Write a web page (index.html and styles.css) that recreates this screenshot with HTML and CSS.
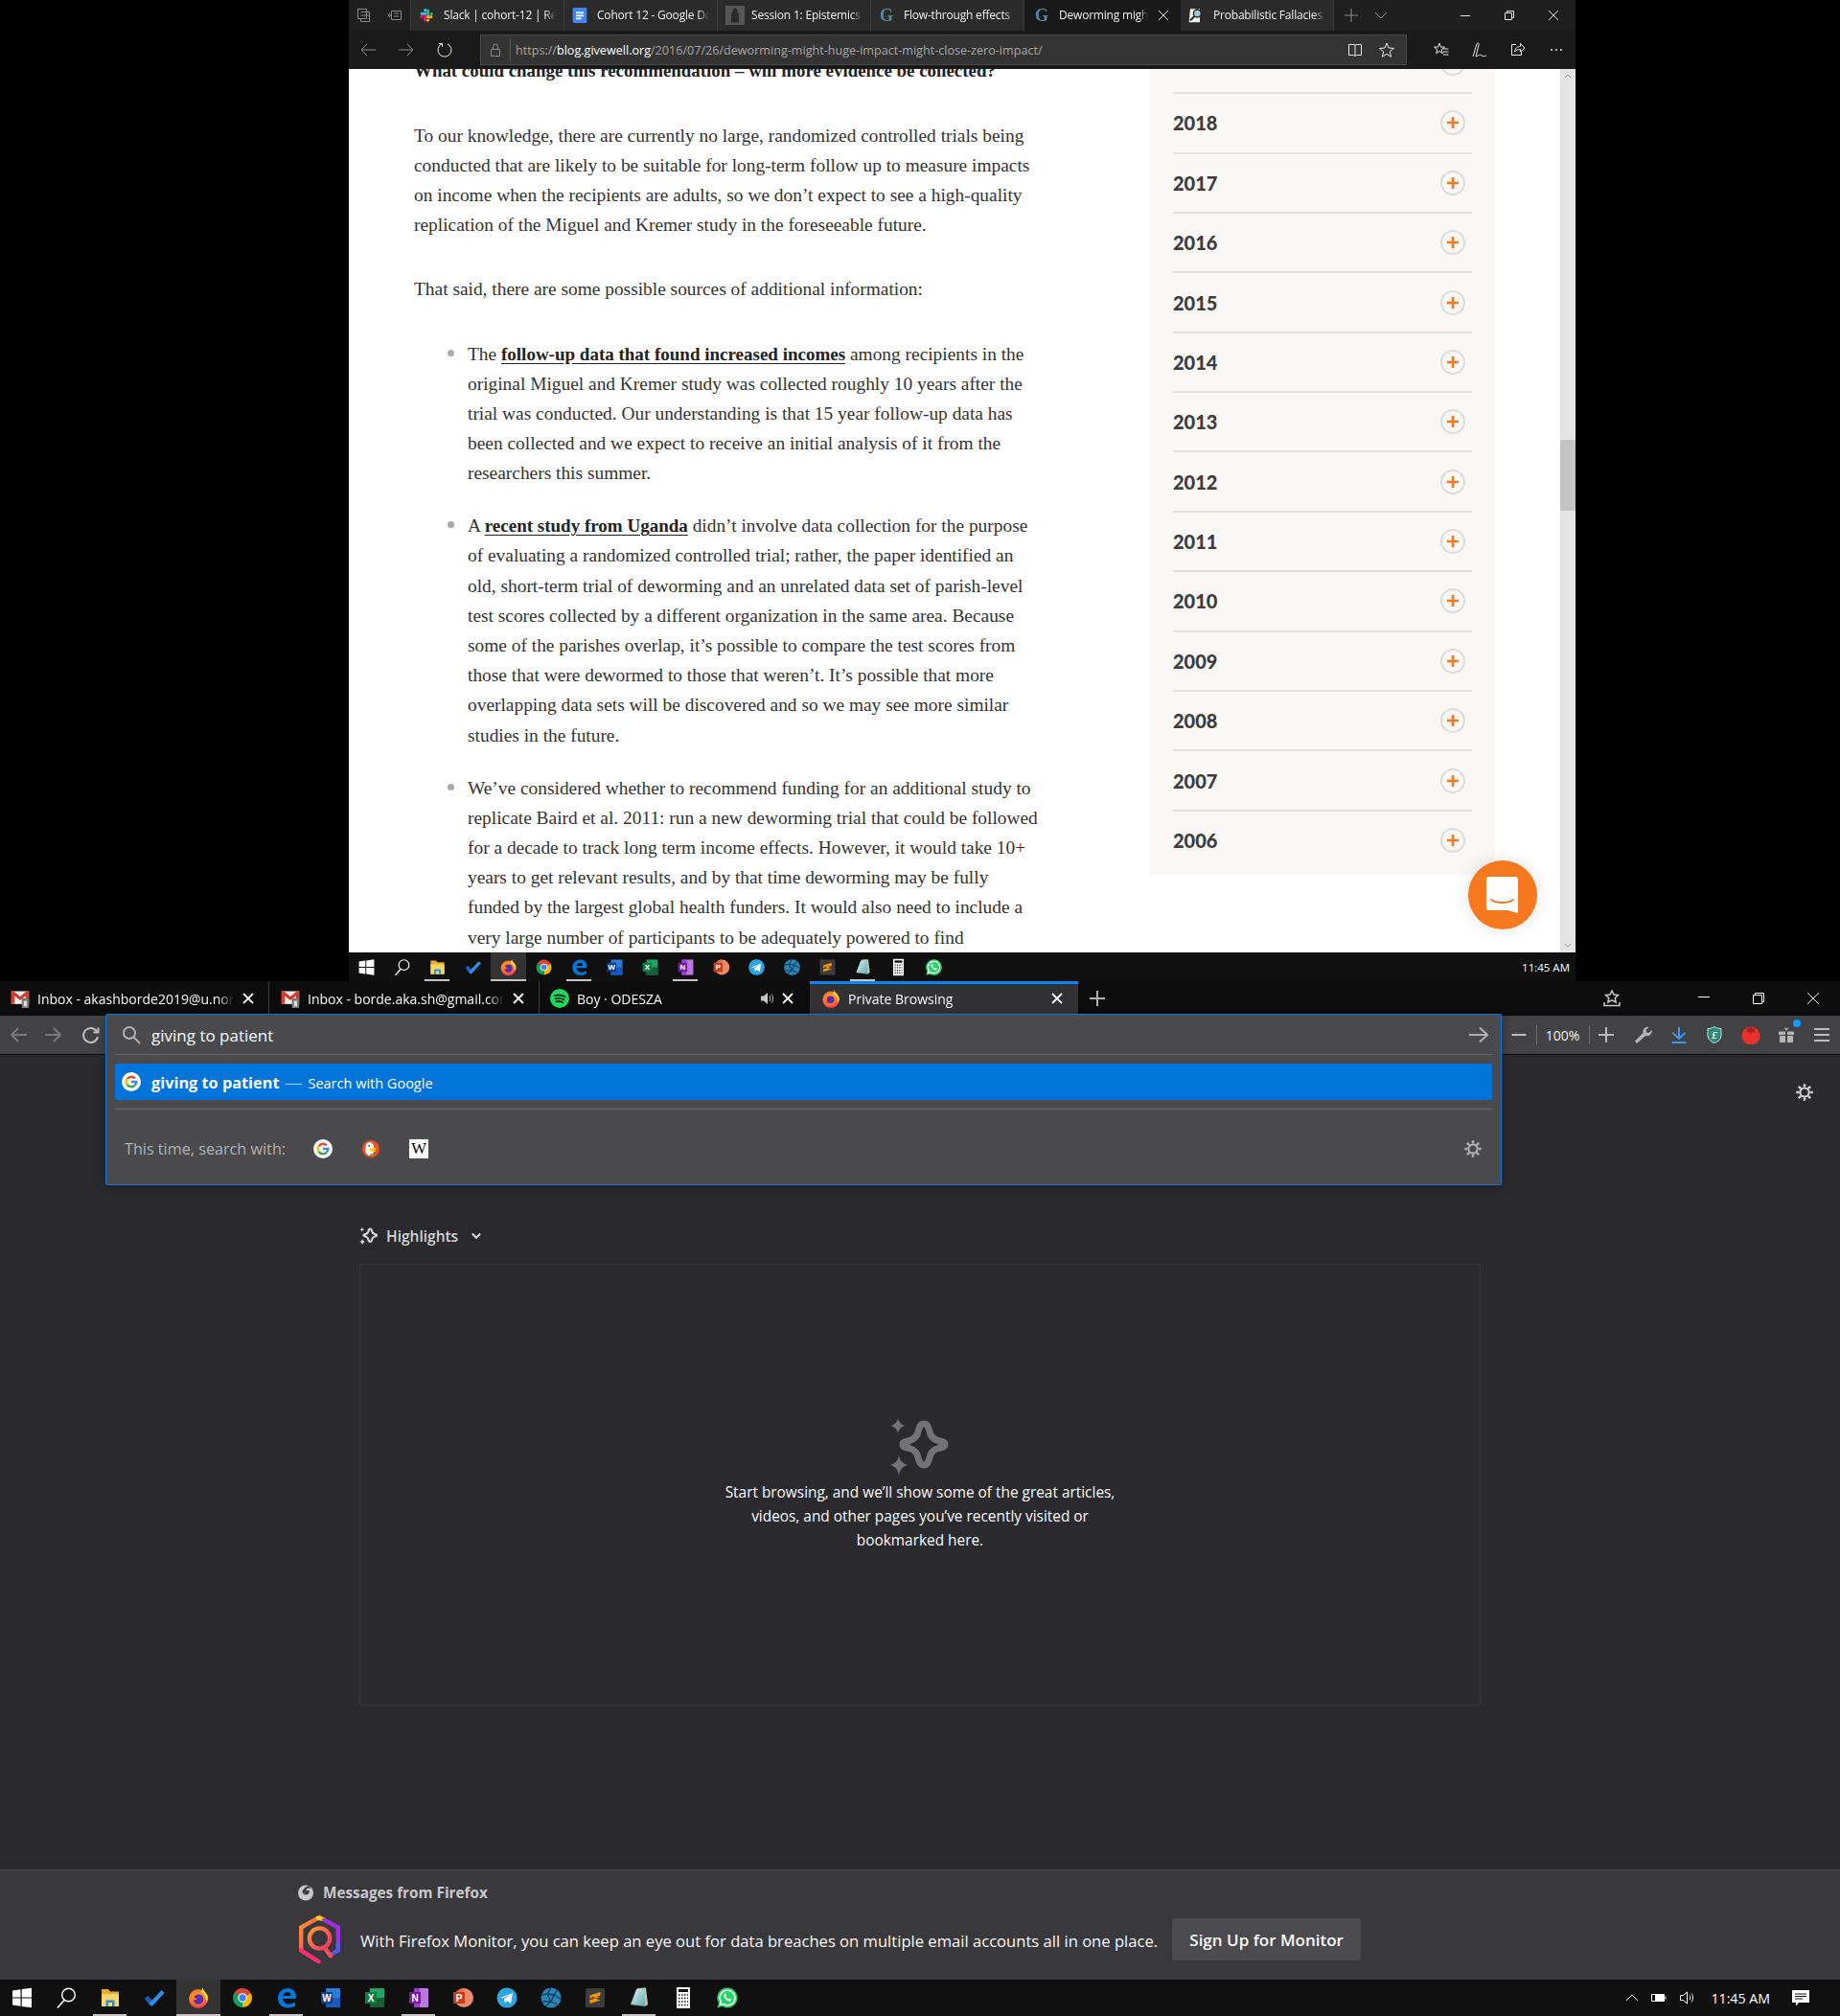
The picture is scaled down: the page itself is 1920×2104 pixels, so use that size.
FILE: index.html
```html
<!DOCTYPE html>
<html lang="en">

<head>
    <meta charset="UTF-8">
    <meta name="viewport" content="width=device-width, initial-scale=1.0">
    <title>Screenshots</title>
    <link rel="stylesheet" href="styles.css">
</head>

<body>
    <!-- shared icons -->
    <svg class="sprite" xmlns="http://www.w3.org/2000/svg">
        <defs>
            <radialGradient id="ffg" cx="45%" cy="40%" r="70%">
                <stop offset="0" stop-color="#ffb21e"/>
                <stop offset="0.6" stop-color="#ff6a2b"/>
                <stop offset="1" stop-color="#e31587"/>
            </radialGradient>
            <linearGradient id="padg" x1="0" y1="0" x2="1" y2="1">
                <stop offset="0" stop-color="#e4f4f4"/>
                <stop offset="1" stop-color="#5fa8ad"/>
            </linearGradient>
            <linearGradient id="mong" x1="0" y1="0" x2="1" y2="1">
                <stop offset="0" stop-color="#ff9a2e"/>
                <stop offset="1" stop-color="#ff2d6f"/>
            </linearGradient>
        </defs>
        <symbol id="i-win" viewBox="0 0 24 24"><path fill="#fff" d="M2 4.500 10.500 3.300V11.400H2ZM11.700 3.100 22 1.700V11.400H11.700ZM2 12.600H10.500V20.700L2 19.500ZM11.700 12.600H22V22.300L11.700 20.900Z"/></symbol>
        <symbol id="i-find" viewBox="0 0 24 24"><circle cx="14.500" cy="9" r="6.800" fill="none" stroke="#fff" stroke-width="1.400"/><path d="M10 14.500 3 22.500" stroke="#fff" stroke-width="1.600"/></symbol>
        <symbol id="i-folder" viewBox="0 0 24 24"><path fill="#e9a92e" d="M3 3h7l2 2.500h9V21H3z"/><path fill="#fbd668" d="M3 8h18v13H3z"/><path fill="#2a8fd8" d="M7.500 21v-6.500h9V21h-2.500v-4h-4v4z"/></symbol>
        <symbol id="i-todo" viewBox="0 0 24 24"><path fill="#1b5cad" d="M2 13l3.200-3.200 5 5-2.600 5.400z"/><path fill="#2f8fe8" d="M6.500 18 19.600 4l3 3L9.600 21z"/></symbol>
        <symbol id="i-ff" viewBox="0 0 24 24"><circle cx="12" cy="13" r="10" fill="url(#ffg)"/><path fill="#ffd43b" d="M16.500 1c.5 4 4.500 6 5.500 10 .5 3-1 5-2 6 .5-6-3-9-6-11 1-1 2-3 2.500-5z"/><circle cx="12" cy="13.500" r="5.200" fill="#5b2bb5"/><path fill="#ff8a1e" d="M3 9.500c2-2 5-2.500 8-1.500-2 1-3.500 2-3.500 3.500 0 1 2 1 3.500 1-1 2-5 2.500-8 .5z"/></symbol>
        <symbol id="i-chrome" viewBox="0 0 24 24"><path fill="#db4437" d="M12 12 3.340 7A10 10 0 0 1 20.660 7Z"/><path fill="#f4b400" d="M12 12 20.660 7A10 10 0 0 1 12 22Z"/><path fill="#0f9d58" d="M12 12 12 22A10 10 0 0 1 3.340 7Z"/><circle cx="12" cy="12" r="4.800" fill="#fff"/><circle cx="12" cy="12" r="3.700" fill="#4285f4"/></symbol>
        <symbol id="i-edge" viewBox="0 0 24 24"><path fill="#0078d7" fill-rule="evenodd" d="M21.500 13H8c.3 3.500 3 5.500 6.500 5.500 2.300 0 4.500-.7 6.500-2v4c-2 1.200-4.600 2-7.500 2C7 22.500 3 18 3 12.500 3 6.500 7.500 2 13.500 2 18.500 2 22 5.500 22 11c0 .7 0 1.300-.5 2zM16.500 10c0-2.300-1.300-4-3.500-4-2.300 0-4.300 1.700-4.800 4z"/></symbol>
        <symbol id="i-word" viewBox="0 0 24 24"><rect x="7" y="2" width="15" height="20" rx="1" fill="#2b7cd3"/><rect x="7" y="12" width="15" height="10" fill="#185abd"/><rect x="2" y="6" width="12" height="12" fill="#103f91"/></symbol>
        <symbol id="i-excel" viewBox="0 0 24 24"><rect x="7" y="2" width="15" height="20" rx="1" fill="#21a366"/><rect x="7" y="12" width="15" height="10" fill="#185c37"/><rect x="2" y="6" width="12" height="12" fill="#107c41"/></symbol>
        <symbol id="i-note" viewBox="0 0 24 24"><rect x="7" y="2" width="15" height="20" rx="1" fill="#ba77e0"/><rect x="7" y="2" width="6" height="20" fill="#9a3fd0"/><rect x="2" y="6" width="12" height="12" fill="#7719aa"/></symbol>
        <symbol id="i-ppt" viewBox="0 0 24 24"><circle cx="13" cy="12" r="10" fill="#ed8a6c"/><path fill="#ed6c47" d="M13 2v10H3a10 10 0 0 1 10-10z"/><rect x="2" y="6" width="12" height="12" fill="#c43e1c"/></symbol>
        <symbol id="i-tg" viewBox="0 0 24 24"><circle cx="12" cy="12" r="10.500" fill="#2ca5e0"/><path fill="#fff" d="M5 12 18 7l-2 11-4-3-2 2.500-1-4.200 7-5-8.500 4.200z"/></symbol>
        <symbol id="i-crystal" viewBox="0 0 24 24"><circle cx="12" cy="12" r="10.500" fill="#2b86b8"/><path fill="none" stroke="#0d3f5c" stroke-width="1.300" d="M12 1.500 8 8l-6 1M8 8l7 1 4-6M15 9l-3 7-6 5M12 16l7 3M15 9l7 4M8 8l4 8-9 0"/></symbol>
        <symbol id="i-subl" viewBox="0 0 24 24"><rect x="2" y="2" width="20" height="20" rx="1.500" fill="#3c3c3c"/><path fill="#ff9800" d="M6.500 9.500 17.500 6v3.500L6.500 13zM6.500 11l11 3.500V11zM6.500 14.500 17.500 11v3.500L6.500 18z"/></symbol>
        <symbol id="i-pad" viewBox="0 0 24 24"><path fill="#c9c2b0" d="M10 2 19 1.500 21 19l-3 2z"/><path fill="url(#padg)" d="M9 3 18 2.500 18 21 3 19z"/></symbol>
        <symbol id="i-calc" viewBox="0 0 24 24"><rect x="5" y="1" width="14" height="22" fill="#fff"/><rect x="7" y="3" width="10" height="3" fill="#111"/><path stroke="#111" stroke-width="1.500" stroke-dasharray="1.500 1.500" d="M7 9h10M7 12.500h10M7 16h10M7 19.500h10"/></symbol>
        <symbol id="i-wa" viewBox="0 0 24 24"><path fill="#25d366" d="M12 1.500A10.500 10.500 0 0 0 3 17.500L1.500 22.500l5.200-1.400A10.500 10.500 0 1 0 12 1.500z"/><path fill="none" stroke="#fff" stroke-width="1.500" d="M12 4.200a7.800 7.800 0 0 0-6.700 11.800l-.8 3.300 3.300-.8A7.800 7.800 0 1 0 12 4.200z"/><path fill="#fff" d="M9 7.800c-1.200 1-1 3.200 1 5.500s4.500 3 5.700 1.800l.6-1.300-2.300-1.200-.8.800c-1.200-.4-2.600-1.800-3-3l.8-.8-1-2.200z"/></symbol>

        <symbol id="i-slack" viewBox="0 0 24 24"><g fill="none" stroke-width="4.400" stroke-linecap="round"><path stroke="#36c5f0" d="M4.500 9.500h6M9.800 4h.4"/><path stroke="#2eb67d" d="M14.500 4.500v6M20 9.800v.4"/><path stroke="#ecb22e" d="M13.500 14.500h6M14 20h.3"/><path stroke="#e01e5a" d="M9.500 13.500v6M4 14v.3"/></g></symbol>
        <symbol id="i-docs" viewBox="0 0 24 24"><rect x="1" y="0" width="22" height="24" rx="2" fill="#4285f4"/><path stroke="#fff" stroke-width="2.400" d="M6 8h12M6 12.500h12M6 17h8"/></symbol>
        <symbol id="i-session" viewBox="0 0 24 24"><rect width="24" height="24" fill="#565656"/><path fill="#2b2b2b" d="M12 3c2 0 3 2 3 4l1.500 3 .5 11H7l.5-11L9 7c0-2 1-4 3-4z"/></symbol>
        <symbol id="i-mag" viewBox="0 0 24 24"><path fill="#f2f2f2" d="M3 2h15v21H1z"/><circle cx="14" cy="9" r="6" fill="#9cc8d8" stroke="#222" stroke-width="2"/><path stroke="#222" stroke-width="3" d="M9.500 13.500 3 20"/></symbol>
        <symbol id="i-gmail" viewBox="0 0 24 24"><rect x="1" y="3" width="22" height="16" fill="#f1f1f1"/><path fill="#d23f31" d="M1 3h3l8 6.500L20 3h3v16h-4V9l-7 5.500L5 9v10H1z"/><rect x="14" y="12" width="9" height="12" rx="1" fill="#777"/><rect x="16.500" y="15" width="4" height="7" fill="#ddd"/></symbol>
        <symbol id="i-spot" viewBox="0 0 24 24"><circle cx="12" cy="12" r="12" fill="#1ed760"/><path fill="none" stroke="#16331f" stroke-width="2.200" stroke-linecap="round" d="M6 8.500c4-1 9-.8 12.500 1.300M6.700 12.300c3.500-.8 7.700-.5 10.500 1.200M7.500 16c2.800-.6 6-.4 8.300 1"/></symbol>
        <symbol id="i-ff-big" viewBox="1 0 22 23"><circle cx="12" cy="13" r="10" fill="url(#ffg)"/><path fill="#ffd43b" d="M16 1c.5 4 5 6 6 10 .5 3-1 5-2 6 .5-6-3-9-6-11 1-1 2-3 2-5z"/><circle cx="11.500" cy="13" r="4.500" fill="#5b2bb5"/></symbol>

        <symbol id="i-gg" viewBox="0 0 24 24"><circle cx="12" cy="12" r="12" fill="#fff"/><g fill="none" stroke-width="2.800"><path stroke="#ea4335" d="M6.800 8.400A6.500 6.500 0 0 1 16.600 7.600"/><path stroke="#fbbc05" d="M6.800 8.400A6.500 6.500 0 0 0 6.800 15.600"/><path stroke="#34a853" d="M6.800 15.600A6.500 6.500 0 0 0 16.600 16.400"/><path stroke="#4285f4" d="M16.600 16.400A6.500 6.500 0 0 0 18.500 12H12"/></g></symbol>
        <symbol id="i-duck" viewBox="0 0 24 24"><circle cx="12" cy="12" r="11" fill="#de5833" stroke="#a83a1c"/><ellipse cx="10.500" cy="12" rx="5.500" ry="8.500" fill="#fff"/><path fill="#fdd20a" d="M11 11h8l-1 2h-3l3 1-1 1.500-6-.5z"/><path fill="#65bc46" d="M11 18h3l1 3-4-1z"/><circle cx="10" cy="8" r="1.200" fill="#2d4f8e"/></symbol>

        <symbol id="i-gear" viewBox="0 0 24 24"><g fill="none" stroke="currentColor"><circle cx="12" cy="12" r="5.500" stroke-width="2.400"/><path stroke-width="3" d="M12 1.500v4M12 18.500v4M1.500 12h4M18.500 12h4M4.600 4.600l2.800 2.800M16.600 16.600l2.800 2.800M4.600 19.400l2.800-2.800M16.600 7.400l2.800-2.800"/></g></symbol>
        <symbol id="i-star4" viewBox="0 0 64 60"><path d="M36 6C40 6 41 10 42 14 43 19 46 22 51 23.500 55 24.500 58 24.500 58 27.500 58 30.500 55 30.500 51 31.500 46 33 43 36 42 41 41 45 40 49 36 49 32 49 31 45 30 41 29 36 26 33 21 31.500 17 30.500 14 30.500 14 27.500 14 24.500 17 24.500 21 23.500 26 22 29 19 30 14 31 10 32 6 36 6Z" fill="none" stroke="currentColor" stroke-width="7" stroke-linejoin="round"/><path fill="currentColor" d="M9 0C10 4 11.500 6 16 8 11.500 10 10 12 9 16 8 12 6.500 10 2 8 6.500 6 8 4 9 0ZM10 39C11 44 13 47 19 49 13 51 11 54 10 60 9 54 7 51 1 49 7 47 9 44 10 39Z"/></symbol>
        <symbol id="i-plus-o" viewBox="0 0 26 26"><circle cx="13" cy="13" r="12" fill="#faf8f6" stroke="#dedcda" stroke-width="2"/><path stroke="#f7791f" stroke-width="2.600" d="M13 7v12M7 13h12"/></symbol>
    </svg>

    <!-- top window: Edge -->
    <div class="edge">
        <div class="edge-tabs">
            <div class="edge-cell">
                <svg class="ic16 line-dim" viewBox="0 0 16 16"><path d="M1.500 1.500h9v3h3v10h-9v-3h-3zM4.500 4.500h6v7h-6M4.500 8h9"/></svg>
            </div>
            <div class="edge-cell">
                <svg class="ic16 line-dim" viewBox="0 0 16 16"><path d="M4.500 3.500h10v9h-10zM4.500 8H1M3 6 1 8l2 2M7 6h5M7 9h5"/></svg>
            </div>
            <div class="edge-tab"><svg class="ic16"><use href="#i-slack"/></svg><span class="edge-tab-text">Slack | cohort-12 | Research</span></div>
            <div class="edge-tab"><svg class="ic16"><use href="#i-docs"/></svg><span class="edge-tab-text">Cohort 12 - Google Docs</span></div>
            <div class="edge-tab"><svg class="ic20"><use href="#i-session"/></svg><span class="edge-tab-text">Session 1: Epistemics</span></div>
            <div class="edge-tab"><svg class="ic16" viewBox="0 0 24 24"><text class="serif-g" x="12" y="21" font-size="27">G</text></svg><span class="edge-tab-text">Flow-through effects</span></div>
            <div class="edge-tab edge-tab-active"><svg class="ic16" viewBox="0 0 24 24"><text class="serif-g" x="12" y="21" font-size="27">G</text></svg><span class="edge-tab-text">Deworming might</span>
                <svg class="ic12 line-lite" viewBox="0 0 12 12"><path d="M1 1l10 10M11 1 1 11"/></svg>
            </div>
            <div class="edge-tab"><svg class="ic16"><use href="#i-mag"/></svg><span class="edge-tab-text">Probabilistic Fallacies</span></div>
            <div class="edge-new">
                <svg class="ic14 line-dim" viewBox="0 0 14 14"><path d="M7 0v14M0 7h14"/></svg>
                <svg class="ic14 line-dim" viewBox="0 0 14 14"><path d="M1 4l6 6 6-6"/></svg>
            </div>
            <div class="win-btns">
                <div class="win-btn"><svg class="ic12 line-lite" viewBox="0 0 12 12"><path d="M1 6.500h10"/></svg></div>
                <div class="win-btn"><svg class="ic12 line-lite" viewBox="0 0 12 12"><path d="M1.500 3.500h7v7h-7zM3.500 3.500v-2h7v7h-2"/></svg></div>
                <div class="win-btn"><svg class="ic12 line-lite" viewBox="0 0 12 12"><path d="M1 1l10 10M11 1 1 11"/></svg></div>
            </div>
        </div>

        <div class="edge-bar">
            <div class="edge-btn"><svg class="ic16 line-dim" viewBox="0 0 16 16"><path d="M16 8H1M7 2 1 8l6 6"/></svg></div>
            <div class="edge-btn"><svg class="ic16 line-dim" viewBox="0 0 16 16"><path d="M0 8h15M9 2l6 6-6 6"/></svg></div>
            <div class="edge-btn"><svg class="ic16 line-lite" viewBox="0 0 16 16"><path d="M5 1.800A7 7 0 1 0 11 1.800M5.500 4.800V1.500H2"/></svg></div>
            <div class="address">
                <svg class="ic14 line-dim" viewBox="0 0 14 14"><path d="M2.500 6.500h9v7h-9zM4.500 6.500V3.500a2.500 2.500 0 0 1 5 0v3"/></svg>
                <span class="address-sep"></span>
                <span class="address-url">https://<b>blog.givewell.org</b>/2016/07/26/deworming-might-huge-impact-might-close-zero-impact/</span>
                <svg class="ic16 line-lite address-book" viewBox="0 0 16 16"><path d="M1.500 2.500h5.500a1 1 0 0 1 1 1 1 1 0 0 1 1-1h5.500v11H9.500l-1.500 1-1.500-1h-5zM8 3.500v11"/></svg>
                <svg class="ic16 line-lite address-star" viewBox="0 0 16 16"><path d="M8 1l2 5 5.500.4-4.200 3.500 1.300 5.300L8 12.300 3.400 15.200l1.300-5.300L.5 6.400 6 6z"/></svg>
            </div>
            <div class="edge-btn edge-btn-first"><svg class="ic16 line-lite" viewBox="0 0 16 16"><path d="M6 1l1.400 4 4.100.2-3.200 2.500 1 4L6 9.400 2.700 11.700l1-4L.5 5.200 4.600 5zM10 7h5.500M10 10h5.500M10 13h5.500"/></svg></div>
            <div class="edge-btn"><svg class="ic16 line-lite" viewBox="0 0 16 16"><path d="M1 15c1.500-4 2-8 4-13 1-2 2.500-1 2 1L4 15c3-1 4-3 6-1 1.500 1 3 1 5 0"/></svg></div>
            <div class="edge-btn"><svg class="ic16 line-lite" viewBox="0 0 16 16"><path d="M6 2.500H1.500v11h10V9M4.500 10c.5-4 3-5.500 6-5.500V1.500L15 6l-4.500 4V7.500c-2.500 0-4.500.5-6 2.500z"/></svg></div>
            <div class="edge-btn"><svg class="ic16 dots" viewBox="0 0 16 16"><path d="M2 8h2M7 8h2M12 8h2"/></svg></div>
        </div>

        <div class="page">
            <div class="article">
                <h2>What could change this recommendation &ndash; will more evidence be collected?</h2>
                <p>To our knowledge, there are currently no large, randomized controlled trials being<br>
                    conducted that are likely to be suitable for long-term follow up to measure impacts<br>
                    on income when the recipients are adults, so we don&rsquo;t expect to see a high-quality<br>
                    replication of the Miguel and Kremer study in the foreseeable future.</p>
                <p>That said, there are some possible sources of additional information:</p>
                <ul>
                    <li>The <a href="#">follow-up data that found increased incomes</a> among recipients in the<br>
                        original Miguel and Kremer study was collected roughly 10 years after the<br>
                        trial was conducted. Our understanding is that 15 year follow-up data has<br>
                        been collected and we expect to receive an initial analysis of it from the<br>
                        researchers this summer.</li>
                    <li>A <a href="#">recent study from Uganda</a> didn&rsquo;t involve data collection for the purpose<br>
                        of evaluating a randomized controlled trial; rather, the paper identified an<br>
                        old, short-term trial of deworming and an unrelated data set of parish-level<br>
                        test scores collected by a different organization in the same area. Because<br>
                        some of the parishes overlap, it&rsquo;s possible to compare the test scores from<br>
                        those that were dewormed to those that weren&rsquo;t. It&rsquo;s possible that more<br>
                        overlapping data sets will be discovered and so we may see more similar<br>
                        studies in the future.</li>
                    <li>We&rsquo;ve considered whether to recommend funding for an additional study to<br>
                        replicate Baird et al. 2011: run a new deworming trial that could be followed<br>
                        for a decade to track long term income effects. However, it would take 10+<br>
                        years to get relevant results, and by that time deworming may be fully<br>
                        funded by the largest global health funders. It would also need to include a<br>
                        very large number of participants to be adequately powered to find</li>
                </ul>
            </div>

            <div class="archive">
                <div class="year-row"><span></span><svg class="year-plus"><use href="#i-plus-o"/></svg></div>
                <div class="year-row"><span>2018</span><svg class="year-plus"><use href="#i-plus-o"/></svg></div>
                <div class="year-row"><span>2017</span><svg class="year-plus"><use href="#i-plus-o"/></svg></div>
                <div class="year-row"><span>2016</span><svg class="year-plus"><use href="#i-plus-o"/></svg></div>
                <div class="year-row"><span>2015</span><svg class="year-plus"><use href="#i-plus-o"/></svg></div>
                <div class="year-row"><span>2014</span><svg class="year-plus"><use href="#i-plus-o"/></svg></div>
                <div class="year-row"><span>2013</span><svg class="year-plus"><use href="#i-plus-o"/></svg></div>
                <div class="year-row"><span>2012</span><svg class="year-plus"><use href="#i-plus-o"/></svg></div>
                <div class="year-row"><span>2011</span><svg class="year-plus"><use href="#i-plus-o"/></svg></div>
                <div class="year-row"><span>2010</span><svg class="year-plus"><use href="#i-plus-o"/></svg></div>
                <div class="year-row"><span>2009</span><svg class="year-plus"><use href="#i-plus-o"/></svg></div>
                <div class="year-row"><span>2008</span><svg class="year-plus"><use href="#i-plus-o"/></svg></div>
                <div class="year-row"><span>2007</span><svg class="year-plus"><use href="#i-plus-o"/></svg></div>
                <div class="year-row"><span>2006</span><svg class="year-plus"><use href="#i-plus-o"/></svg></div>
            </div>

            <div class="page-gap"></div>

            <div class="scrollbar">
                <svg class="scroll-arrow" viewBox="0 0 10 6"><path d="M1 5l4-4 4 4"/></svg>
                <div class="scroll-thumb"></div>
                <svg class="scroll-arrow scroll-arrow-down" viewBox="0 0 10 6"><path d="M1 1l4 4 4-4"/></svg>
            </div>

            <div class="chat-btn">
                <svg width="36" height="40" viewBox="0 0 36 40"><path fill="#fff" d="M4 1h27a3 3 0 0 1 3 3v35l-11-3H4a3 3 0 0 1-3-3V4a3 3 0 0 1 3-3z"/><path fill="none" stroke="#f7791f" stroke-width="2" stroke-linecap="round" d="M6 25c6 4 17 4 23 0"/></svg>
            </div>
        </div>

        <div class="taskbar taskbar-small">
            <div class="task-cell"><svg><use href="#i-win"/></svg></div>
            <div class="task-cell"><svg><use href="#i-find"/></svg></div>
            <div class="task-cell task-open"><svg><use href="#i-folder"/></svg></div>
            <div class="task-cell"><svg><use href="#i-todo"/></svg></div>
            <div class="task-cell task-open task-active"><svg><use href="#i-ff"/></svg></div>
            <div class="task-cell"><svg><use href="#i-chrome"/></svg></div>
            <div class="task-cell task-open"><svg><use href="#i-edge"/></svg></div>
            <div class="task-cell"><svg viewBox="0 0 24 24"><use href="#i-word"/><text class="logo-letter" x="8" y="15.600" font-size="10">W</text></svg></div>
            <div class="task-cell"><svg viewBox="0 0 24 24"><use href="#i-excel"/><text class="logo-letter" x="8" y="15.600" font-size="10">X</text></svg></div>
            <div class="task-cell task-open"><svg viewBox="0 0 24 24"><use href="#i-note"/><text class="logo-letter" x="8" y="15.600" font-size="10">N</text></svg></div>
            <div class="task-cell"><svg viewBox="0 0 24 24"><use href="#i-ppt"/><text class="logo-letter" x="8" y="15.600" font-size="10">P</text></svg></div>
            <div class="task-cell"><svg><use href="#i-tg"/></svg></div>
            <div class="task-cell"><svg><use href="#i-crystal"/></svg></div>
            <div class="task-cell"><svg><use href="#i-subl"/></svg></div>
            <div class="task-cell task-open"><svg><use href="#i-pad"/></svg></div>
            <div class="task-cell"><svg><use href="#i-calc"/></svg></div>
            <div class="task-cell"><svg><use href="#i-wa"/></svg></div>
            <div class="task-clock">11:45 AM</div>
        </div>
    </div>

    <!-- bottom window: Firefox -->
    <div class="ff">
        <div class="ff-tabs">
            <div class="ff-tab ff-tab-first">
                <svg class="ic20"><use href="#i-gmail"/></svg>
                <span class="ff-tab-text">Inbox - akashborde2019@u.northwestern.edu</span>
                <svg class="ic14 line-white" viewBox="0 0 14 14"><path d="M2 2l10 10M12 2 2 12"/></svg>
            </div>
            <div class="ff-tab">
                <svg class="ic20"><use href="#i-gmail"/></svg>
                <span class="ff-tab-text">Inbox - borde.aka.sh@gmail.com</span>
                <svg class="ic14 line-white" viewBox="0 0 14 14"><path d="M2 2l10 10M12 2 2 12"/></svg>
            </div>
            <div class="ff-tab ff-tab-spotify">
                <svg class="ic20"><use href="#i-spot"/></svg>
                <span class="ff-tab-text">Boy &middot; ODESZA</span>
                <svg class="ic16 speaker" viewBox="0 0 16 16"><path fill="#c8c8c8" d="M1 5.500h3L8 2v12L4 10.500H1z"/><path fill="none" stroke="#c8c8c8" d="M10 5c1.200 1.500 1.200 4.500 0 6M12 3.500c2 2.500 2 6.500 0 9"/></svg>
                <svg class="ic14 line-white" viewBox="0 0 14 14"><path d="M2 2l10 10M12 2 2 12"/></svg>
            </div>
            <div class="ff-tab ff-tab-active">
                <svg class="ic20"><use href="#i-ff-big"/></svg>
                <span class="ff-tab-text">Private Browsing</span>
                <svg class="ic14 line-white" viewBox="0 0 14 14"><path d="M2 2l10 10M12 2 2 12"/></svg>
            </div>
            <div class="ff-new"><svg class="ic18 line-gray" viewBox="0 0 18 18"><path d="M9 1v16M1 9h16"/></svg></div>
            <div class="ff-tabs-right">
                <svg class="ic18 pocket" viewBox="0 0 18 18"><path d="M9 1l2 4 4.500.5-3.200 3 .9 4.500L9 10.800 4.800 13l.9-4.500-3.200-3L7 5zM1 13v3.500h16V13"/></svg>
                <div class="ff-win-btns">
                    <div class="ff-win-btn"><svg class="ic14 line-white-thin" viewBox="0 0 14 14"><path d="M1 5.500h12"/></svg></div>
                    <div class="ff-win-btn"><svg class="ic14 line-white-thin" viewBox="0 0 14 14"><path d="M1.500 3.500h9v9h-9zM3.500 3.500v-2h9v9h-2"/></svg></div>
                    <div class="ff-win-btn"><svg class="ic14 line-white-thin" viewBox="0 0 14 14"><path d="M1 1l12 12M13 1 1 13"/></svg></div>
                </div>
            </div>
        </div>

        <div class="ff-toolbar">
            <svg class="ic20 tool-nav tool-dim" viewBox="0 0 20 20"><path d="M19 10H3M10 3l-7 7 7 7"/></svg>
            <svg class="ic20 tool-nav tool-dim" viewBox="0 0 20 20"><path d="M1 10h16M10 3l7 7-7 7"/></svg>
            <svg class="ic20 tool-nav tool-lite tool-reload" viewBox="0 0 20 20"><path d="M16 6.500A7.500 7.500 0 1 0 17 12M17.500 2.500v5h-5"/></svg>
            <div class="tool-right">
                <svg class="ic18 tool-lite tool-zoom-btn" viewBox="0 0 18 18"><path d="M1.500 9h15"/></svg>
                <span class="tool-sep"></span>
                <span class="tool-zoom">100%</span>
                <span class="tool-sep"></span>
                <svg class="ic18 tool-lite tool-zoom-btn tool-plus" viewBox="0 0 18 18"><path d="M9 1v16M1 9h16"/></svg>
                <div class="tool-cell"><svg class="ic20" viewBox="0 0 20 20"><path fill="#b4b4b4" d="M2 16.500 10.500 8a5 5 0 0 1 6-6l-3 3 .5 2.500 2.500.5 3-3a5 5 0 0 1-6.500 6L4 19z"/></svg></div>
                <div class="tool-cell"><svg class="ic20 tool-blue" viewBox="0 0 20 20"><path d="M10 2v11M3.500 8l6.500 6 6.500-6M2.500 18h15"/></svg></div>
                <div class="tool-cell"><svg class="ic20" viewBox="0 0 20 20"><path fill="#2d8a78" stroke="#c8e8de" d="M10 1.500c2 1.500 4.500 2 7 2v7c0 4-3 6.500-7 8-4-1.500-7-4-7-8v-7c2.500 0 5-.5 7-2z"/><text class="shield-text" x="10" y="14" font-size="11">&pound;</text></svg></div>
                <div class="tool-cell"><svg class="ic20" viewBox="0 0 20 20"><circle cx="10" cy="11" r="9.500" fill="#e8322c"/><path fill="#a81e1a" d="M10 1l1.500 2.500L15 3l-2 2.500 2 2-3.500-.5L10 9.500 8.500 7 5 7.500l2-2L5 3l3.500.5z"/></svg></div>
                <div class="tool-cell"><svg class="ic20" viewBox="0 0 20 20"><path fill="#b4b4b4" d="M2 6.500h7v3.500H2zM11 6.500h7v3.500h-7zM3 11h6v7H3zM11 11h6v7h-6zM8 3.500l2 2.500 2-2.500-1-1-1 1-1-1z"/></svg><span class="gift-dot"></span></div>
                <div class="tool-cell"><svg class="ic20 tool-lite" viewBox="0 0 20 20"><path d="M2 4h16M2 10h16M2 16h16"/></svg></div>
            </div>
        </div>

        <div class="ff-content">
            <svg class="ic20 page-gear"><use href="#i-gear"/></svg>
            <div class="highlights">
                <div class="hl-head">
                    <svg class="ic20 hl-star"><use href="#i-star4"/></svg>
                    <span>Highlights</span>
                    <svg class="hl-chev" viewBox="0 0 10 10"><path d="M1.500 3 5 6.500 8.500 3"/></svg>
                </div>
                <div class="hl-box">
                    <svg class="empty-star"><use href="#i-star4"/></svg>
                    <div class="empty-text">Start browsing, and we&rsquo;ll show some of the great articles,<br>
                        videos, and other pages you&rsquo;ve recently visited or<br>
                        bookmarked here.</div>
                </div>
            </div>
        </div>

        <div class="messages">
            <div class="msg-head">
                <svg class="ic18" viewBox="0 0 18 18"><circle cx="9" cy="9.500" r="8" fill="#c8c8cc"/><path fill="#38383d" d="M12 2c1 1 2 2 2 3-1-.5-2-.8-3-.5L9 7h4c0 3-2 4.500-4 4.500-2 0-3-1-3.500-2.500C7 10 8 9.500 8 9H5.500c0-1.500 1-3.500 3-5 1-.8 2.500-1.500 3.500-2z"/></svg>
                <span>Messages from Firefox</span>
            </div>
            <div class="msg-row">
                <svg class="msg-logo" viewBox="0 0 48 54">
                    <g fill="none" stroke-width="4.500" stroke-linecap="round">
                        <path stroke="url(#mong)" d="M24 3 4 14v25"/>
                        <path stroke="#ff2d6f" d="M4 39l19 12"/>
                        <path stroke="#ffd21e" d="M22 4l6 1"/>
                        <path stroke="#a030e0" d="M29 6l15 8v18"/>
                        <path stroke="#5b5be8" d="M44 32v7l-5 3"/>
                        <path stroke="#ff4f5e" d="M30 37l6 8"/>
                        <circle stroke="url(#mong)" cx="24" cy="26" r="11"/>
                    </g>
                </svg>
                <span class="msg-text">With Firefox Monitor, you can keep an eye out for data breaches on multiple email accounts all in one place.</span>
                <button class="msg-btn">Sign Up for Monitor</button>
            </div>
        </div>

        <div class="taskbar">
            <div class="task-cell"><svg><use href="#i-win"/></svg></div>
            <div class="task-cell"><svg><use href="#i-find"/></svg></div>
            <div class="task-cell task-open"><svg><use href="#i-folder"/></svg></div>
            <div class="task-cell"><svg><use href="#i-todo"/></svg></div>
            <div class="task-cell task-open task-active"><svg><use href="#i-ff"/></svg></div>
            <div class="task-cell"><svg><use href="#i-chrome"/></svg></div>
            <div class="task-cell task-open"><svg><use href="#i-edge"/></svg></div>
            <div class="task-cell"><svg viewBox="0 0 24 24"><use href="#i-word"/><text class="logo-letter" x="8" y="15.600" font-size="10">W</text></svg></div>
            <div class="task-cell"><svg viewBox="0 0 24 24"><use href="#i-excel"/><text class="logo-letter" x="8" y="15.600" font-size="10">X</text></svg></div>
            <div class="task-cell task-open"><svg viewBox="0 0 24 24"><use href="#i-note"/><text class="logo-letter" x="8" y="15.600" font-size="10">N</text></svg></div>
            <div class="task-cell"><svg viewBox="0 0 24 24"><use href="#i-ppt"/><text class="logo-letter" x="8" y="15.600" font-size="10">P</text></svg></div>
            <div class="task-cell"><svg><use href="#i-tg"/></svg></div>
            <div class="task-cell"><svg><use href="#i-crystal"/></svg></div>
            <div class="task-cell"><svg><use href="#i-subl"/></svg></div>
            <div class="task-cell task-open"><svg><use href="#i-pad"/></svg></div>
            <div class="task-cell"><svg><use href="#i-calc"/></svg></div>
            <div class="task-cell"><svg><use href="#i-wa"/></svg></div>
            <div class="tray">
                <svg class="ic14 tray-line" viewBox="0 0 14 14"><path d="M1 10l6-6 6 6"/></svg>
                <svg class="ic18 tray-line" viewBox="0 0 18 18"><path d="M1.500 5.500h13v7h-13zM16 7.500v3"/><rect x="5" y="6" width="9" height="6" fill="#fff"/></svg>
                <svg class="ic18 tray-line" viewBox="0 0 18 18"><path d="M1.500 6.500h3L8.500 3v12l-4-3.500h-3zM11 6.500c1 1.500 1 3.500 0 5M13 4.500c2 2.500 2 6.500 0 9"/></svg>
                <span class="tray-clock">11:45 AM</span>
                <svg class="ic20 tray-note" viewBox="0 0 20 20"><path fill="#fff" d="M1 2h18v13H8l-3 3.500V15H1z"/><path stroke="#111" d="M4 6h12M4 8.500h12M4 11h8"/></svg>
            </div>
        </div>

        <!-- url dropdown sits over the toolbar and the page -->
        <div class="url-panel">
            <div class="url-input">
                <svg class="ic20 url-search" viewBox="0 0 20 20"><circle cx="8" cy="8" r="6"/><path d="M12.500 12.500 19 19"/></svg>
                <span class="url-value">giving to patient</span>
                <svg class="ic20 url-go" viewBox="0 0 20 20"><path d="M0 10h19M11 2.500l8 7.500-8 7.500"/></svg>
            </div>
            <div class="url-result">
                <svg class="ic20"><use href="#i-gg"/></svg>
                <b>giving to patient</b>
                <span class="url-dash"></span>
                <span>Search with Google</span>
            </div>
            <div class="url-oneoff">
                <span class="oneoff-label">This time, search with:</span>
                <svg class="ic20 oneoff-icon"><use href="#i-gg"/></svg>
                <svg class="ic20 oneoff-icon"><use href="#i-duck"/></svg>
                <svg class="ic20 oneoff-icon" viewBox="0 0 24 24"><rect width="24" height="24" fill="#fff"/><text class="serif-w" x="12" y="18" font-size="20">W</text></svg>
                <svg class="ic20 oneoff-gear"><use href="#i-gear"/></svg>
            </div>
        </div>
    </div>
</body>

</html>
```

FILE: styles.css
```css
* {
    box-sizing: border-box;
}

body {
    margin: 0;
    padding: 0;
    width: 1920px;
    height: 2104px;
    overflow: hidden;
    background-color: #000;
    font-family: "Open Sans", "Noto Sans", sans-serif;
}

svg {
    display: block;
    flex: none;
}

.sprite {
    width: 0;
    height: 0;
    overflow: hidden;
}

.logo-letter {
    font-family: "Liberation Sans", sans-serif;
    font-weight: 700;
    fill: #fff;
    text-anchor: middle;
}

.serif-g {
    font-family: "Liberation Serif", serif;
    font-weight: 700;
    fill: #4f8aa8;
    text-anchor: middle;
}

.serif-w {
    font-family: "Liberation Serif", serif;
    fill: #000;
    text-anchor: middle;
}

.shield-text {
    font-family: "Liberation Serif", serif;
    font-weight: 700;
    font-style: italic;
    fill: #fff;
    text-anchor: middle;
}

.ic12 { width: 12px; height: 12px; }
.ic14 { width: 14px; height: 14px; }
.ic16 { width: 16px; height: 16px; }
.ic18 { width: 18px; height: 18px; }
.ic20 { width: 20px; height: 20px; }

.line-dim path { fill: none; stroke: #8a8a8a; stroke-width: 1; }
.line-lite path { fill: none; stroke: #e8e8e8; stroke-width: 1; }
.line-gray path { fill: none; stroke: #b1b1b3; stroke-width: 2; }
.line-white path { fill: none; stroke: #f4f4f4; stroke-width: 1.8; }
.line-white-thin path { fill: none; stroke: #f4f4f4; stroke-width: 1; }

/* Edge window */

.edge {
    width: 1280px;
    height: 1024px;
    margin-left: 364px;
    display: flex;
    flex-direction: column;
}

.edge-tabs {
    height: 32px;
    display: flex;
    background-color: #1f1f1f;
}

.edge-cell {
    width: 32px;
    display: flex;
    align-items: center;
    justify-content: center;
}

.edge-cell:nth-child(2) {
    width: 33px;
    border-right: 1px solid #3a3a3a;
}

.edge-tab {
    width: 160px;
    padding: 0 8px 2px;
    display: flex;
    align-items: center;
    gap: 10px;
    background-color: #2b2b2b;
    border-right: 1px solid #3a3a3a;
    color: #f0f0f0;
    font-size: 12px;
    letter-spacing: -0.2px;
}

.edge-tab svg {
    margin-top: 2px;
}

.edge-tab .ic20 {
    margin-right: -3px;
}

.edge-tab-active {
    width: 163px;
    padding-left: 10px;
    padding-right: 12px;
    background-color: #191919;
    border-right: none;
}

.edge-tab-text {
    flex: 1;
    overflow: hidden;
    white-space: nowrap;
    -webkit-mask-image: linear-gradient(to right, #000 90%, transparent);
    mask-image: linear-gradient(to right, #000 90%, transparent);
}

.edge-new {
    display: flex;
    align-items: center;
    gap: 17px;
    padding-left: 11px;
}

.win-btns {
    display: flex;
    margin-left: auto;
}

.win-btn {
    width: 46px;
    display: flex;
    align-items: center;
    justify-content: center;
}

.edge-bar {
    height: 40px;
    display: flex;
    align-items: center;
    background-color: #1a1a1a;
}

.edge-btn {
    width: 40px;
    height: 40px;
    display: flex;
    align-items: center;
    justify-content: center;
}

.edge-btn-first {
    margin-left: 16px;
}

.address {
    width: 967px;
    height: 32px;
    margin-left: 17px;
    display: flex;
    align-items: center;
    background-color: #333;
    border: 1px solid #4a4a4a;
    padding-left: 8px;
}

.address-sep {
    width: 1px;
    height: 24px;
    margin-left: 8px;
    background-color: #555;
}

.address-url {
    margin-left: 5px;
    font-size: 12.6px;
    color: #a8a8a8;
    white-space: nowrap;
}

.address-url b {
    font-weight: 400;
    color: #fff;
}

.address-book {
    margin-left: auto;
}

.address-star {
    margin-left: 17px;
    margin-right: 12px;
}

.dots path {
    fill: none;
    stroke: #e8e8e8;
    stroke-width: 1.5;
}

.page {
    position: relative;
    height: 922px;
    display: flex;
    overflow: hidden;
    background-color: #fff;
}

.article {
    width: 836px;
    padding-left: 68px;
    margin-top: -14.5px;
    font-family: "Liberation Serif", serif;
    font-size: 19.4px;
    line-height: 31.2px;
    color: #333;
}

.article h2 {
    margin: 0 0 37px;
    font-size: 18.9px;
    line-height: 31px;
    font-weight: 700;
    color: #222;
}

.article p {
    margin: 0 0 36px;
    white-space: nowrap;
}

.article ul {
    margin: -1px 0 0;
    padding: 0 0 0 56px;
    white-space: nowrap;
}

.article li {
    margin-bottom: 22.7px;
}

.article li::marker {
    color: #aaa;
    font-size: 24px;
}

.article a {
    color: #222;
    font-size: 0.98em;
    font-weight: 700;
    text-decoration: underline;
    text-underline-offset: 3px;
}

.archive {
    width: 360px;
    height: 841px;
    padding: 0 24px;
    overflow: hidden;
    background-color: #faf8f6;
}

.year-row {
    height: 62.39px;
    display: flex;
    align-items: center;
    justify-content: space-between;
    padding-right: 7px;
    border-top: 2px solid #e4e2e0;
    font-family: Lato, sans-serif;
    font-size: 20px;
    font-weight: 900;
    color: #3c3c3c;
}

.year-row:first-child {
    margin-top: -38.2px;
}

.year-plus {
    width: 26px;
    height: 26px;
}

.page-gap {
    width: 68px;
}

.scrollbar {
    width: 16px;
    display: flex;
    flex-direction: column;
    align-items: center;
    background-color: #e4e4e4;
}

.scroll-arrow {
    width: 8px;
    height: 5px;
    margin-top: 5px;
    flex: none;
}

.scroll-arrow path {
    fill: none;
    stroke: #8a8a8a;
}

.scroll-thumb {
    width: 16px;
    height: 74px;
    margin-top: 377px;
    background-color: #c4c4c4;
}

.scroll-arrow-down {
    margin-top: auto;
    margin-bottom: 5px;
}

.chat-btn {
    position: absolute;
    right: 40px;
    bottom: 24px;
    width: 72px;
    height: 72px;
    border-radius: 50%;
    background-color: #f7791f;
    box-shadow: 0 0 18px rgba(0, 0, 0, 0.12);
    display: flex;
    align-items: center;
    justify-content: center;
}

/* Windows taskbars */

.taskbar {
    height: 38px;
    display: flex;
    background-color: #101010;
}

.task-cell {
    position: relative;
    width: 46px;
    display: flex;
    align-items: center;
    justify-content: center;
}

.task-cell svg {
    width: 24px;
    height: 24px;
}

.task-open::after {
    content: "";
    position: absolute;
    left: 5px;
    right: 6px;
    bottom: 0;
    height: 2px;
    background-color: #c8c4c4;
}

.task-active {
    background-color: #333;
}

.task-active::after {
    left: 0;
    right: 0;
}

.taskbar-small {
    height: 30px;
}

.taskbar-small .task-cell {
    width: 37px;
}

.taskbar-small .task-cell svg {
    width: 19px;
    height: 19px;
}

.task-clock {
    margin-left: auto;
    padding-right: 6px;
    align-self: center;
    font-size: 11.5px;
    color: #fff;
}

.tray {
    margin-left: auto;
    display: flex;
    align-items: center;
    padding-right: 32px;
    color: #fff;
    font-size: 14.2px;
}

.tray-line path {
    fill: none;
    stroke: #fff;
}

.tray-line {
    margin-right: 12px;
}

.tray-clock {
    margin-left: 3px;
    margin-right: 22px;
}

.tray-note {
    margin-right: -1px;
}

/* Firefox window */

.ff {
    position: relative;
    height: 1080px;
    display: flex;
    flex-direction: column;
    background-color: #2a2a2e;
}

.ff-tabs {
    height: 36px;
    display: flex;
    background-color: #0c0c0d;
    color: #f9f9fa;
    font-size: 14px;
}

.ff-tab {
    width: 282px;
    padding: 0 14px 0 12px;
    display: flex;
    align-items: center;
    gap: 8px;
    border-right: 1px solid #3f3f42;
}

.ff-tab-first {
    width: 281px;
    padding-left: 11px;
}

.ff-tab-spotify {
    padding-left: 11px;
    padding-right: 16px;
    border-right: none;
}

.ff-tab-active {
    width: 280px;
    padding-left: 12px;
    padding-right: 15px;
    padding-bottom: 3px;
    background-color: #323234;
    border-right: none;
    border-top: 3px solid #0a84ff;
}

.ff-tab-text {
    flex: 1;
    overflow: hidden;
    white-space: nowrap;
    -webkit-mask-image: linear-gradient(to right, #000 92%, transparent);
    mask-image: linear-gradient(to right, #000 92%, transparent);
}

.speaker {
    margin-right: -2px;
}

.ff-new {
    width: 40px;
    display: flex;
    align-items: center;
    justify-content: center;
}

.ff-tabs-right {
    flex: 1;
    display: flex;
    align-items: center;
}

.pocket {
    margin-left: 508px;
}

.pocket path {
    fill: none;
    stroke: #c8c8c8;
    stroke-width: 1.5;
}

.ff-win-btns {
    display: flex;
    margin-left: auto;
}

.ff-win-btn {
    width: 57px;
    display: flex;
    justify-content: center;
}

.ff-toolbar {
    height: 41px;
    display: flex;
    align-items: center;
    padding-left: 9px;
    gap: 17px;
    background-color: #424244;
    border-bottom: 1px solid #0c0c0d;
}

.tool-nav {
    flex: none;
}

.tool-reload {
    margin-left: 2px;
}

.tool-dim path {
    fill: none;
    stroke: #78787a;
    stroke-width: 2;
}

.tool-lite path {
    fill: none;
    stroke: #bdbdbf;
    stroke-width: 2;
}

.tool-blue path {
    fill: none;
    stroke: #3a9bf2;
    stroke-width: 2;
}

.tool-right {
    margin-left: auto;
    display: flex;
    align-items: center;
}

.tool-zoom-btn {
    margin: 0 9px;
}

.tool-plus {
    margin: 0 11px 0 8px;
}

.tool-sep {
    width: 1px;
    height: 20px;
    background-color: #6f6f72;
}

.tool-zoom {
    width: 54px;
    text-align: center;
    font-size: 14px;
    color: #f0f0f0;
}

.tool-cell {
    position: relative;
    width: 37.4px;
    display: flex;
    justify-content: center;
}

.gift-dot {
    position: absolute;
    top: -6px;
    right: 4px;
    width: 8px;
    height: 8px;
    border-radius: 50%;
    background-color: #0a9dff;
}

.ff-content {
    position: relative;
    flex: 1;
    padding-top: 176px;
}

.page-gear {
    position: absolute;
    top: 29px;
    right: 27px;
    color: #d0d0d2;
}

.highlights {
    width: 1170px;
    margin-left: 375px;
}

.hl-head {
    height: 26px;
    display: flex;
    align-items: center;
    color: #d4d4d6;
    font-size: 15.5px;
    font-weight: 600;
}

.hl-star {
    color: #d4d4d6;
    margin-right: 8px;
}

.hl-chev {
    width: 12px;
    height: 12px;
    margin-left: 13px;
}

.hl-chev path {
    fill: none;
    stroke: #d4d4d6;
    stroke-width: 1.8;
}

.hl-box {
    height: 461px;
    margin-top: 16px;
    display: flex;
    flex-direction: column;
    align-items: center;
    justify-content: center;
    border: 1px solid #38383d;
    border-radius: 3px;
}

.empty-star {
    width: 64px;
    height: 60px;
    color: #737375;
}

.empty-text {
    margin-top: 5px;
    text-align: center;
    font-size: 15.4px;
    line-height: 25px;
    color: #f9f9fa;
}

.messages {
    height: 115px;
    padding: 11px 0 0 310px;
    background-color: #38383d;
    border-top: 1px solid #4a4a4f;
}

.msg-head {
    height: 24px;
    display: flex;
    align-items: center;
    gap: 9px;
    color: #c8c8cc;
    font-size: 15.3px;
    font-weight: 700;
}

.msg-row {
    height: 52px;
    margin-top: 11px;
    display: flex;
    align-items: center;
}

.msg-logo {
    width: 47px;
    height: 52px;
}

.msg-text {
    margin-left: 19px;
    padding-top: 2px;
    font-size: 16.6px;
    color: #f9f9fa;
    white-space: nowrap;
}

.msg-btn {
    width: 197px;
    height: 44px;
    margin-left: 15px;
    background-color: #4a4a4f;
    border: none;
    border-radius: 2px;
    color: #f9f9fa;
    font-family: inherit;
    font-size: 17px;
    font-weight: 600;
}

/* url dropdown */

.url-panel {
    position: absolute;
    top: 34px;
    left: 110px;
    width: 1457px;
    height: 179px;
    padding: 0 9px;
    background-color: #4a4a4c;
    border: 1px solid #0a74d9;
    border-radius: 2px;
    box-shadow: 0 2px 8px rgba(0, 0, 0, 0.3);
}

.url-input {
    height: 41px;
    display: flex;
    align-items: center;
    border-bottom: 1px solid #69696e;
    margin-top: 1px;
}

.url-search {
    margin-left: 7px;
    margin-right: 11px;
}

.url-search circle,
.url-search path {
    fill: none;
    stroke: #b1b1b3;
    stroke-width: 2;
}

.url-value {
    font-size: 17px;
    color: #f9f9fa;
}

.url-go {
    margin-left: auto;
    margin-right: 4px;
}

.url-go path {
    fill: none;
    stroke: #b1b1b3;
    stroke-width: 2;
}

.url-result {
    height: 38px;
    margin-top: 9px;
    padding-left: 7px;
    padding-top: 2px;
    display: flex;
    align-items: center;
    background-color: #0074d9;
    border-radius: 2px;
    color: #fff;
    font-size: 14.5px;
}

.url-result svg {
    margin-top: -2px;
}

.url-result b {
    margin-left: 11px;
    font-size: 16.3px;
    font-weight: 700;
}

.url-dash {
    width: 17px;
    height: 1px;
    margin: 2px 6px 0 7px;
    background-color: #b8d6f2;
}

.url-oneoff {
    height: 79px;
    margin-top: 9px;
    padding-left: 10px;
    padding-top: 3px;
    display: flex;
    align-items: center;
    border-top: 1px solid #69696e;
}

.oneoff-label {
    width: 197px;
    font-size: 16.2px;
    color: #b1b1b3;
}

.oneoff-icon {
    margin-right: 30px;
}

.oneoff-gear {
    margin-left: auto;
    margin-right: 10px;
    color: #b1b1b3;
}
```
